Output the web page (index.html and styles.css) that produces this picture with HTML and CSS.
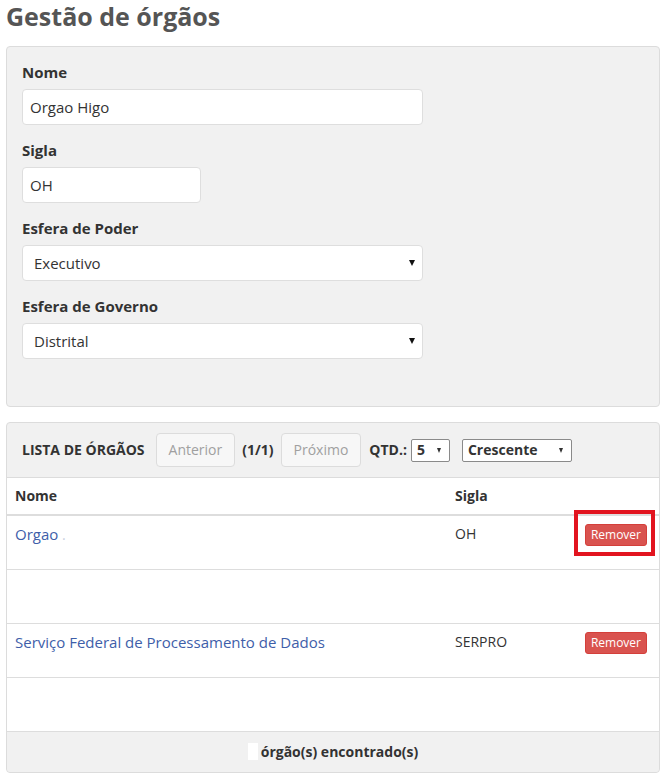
FILE: index.html
```html
<!DOCTYPE html>
<html lang="pt">
<head>
<meta charset="utf-8">
<title>Gestão de órgãos</title>
<link rel="stylesheet" href="styles.css">
</head>
<body>
<div class="page">
  <h1 class="title">Gestão de órgãos</h1>

  <div class="panel form-panel">
    <div class="group">
      <div class="label">Nome</div>
      <div class="field wide">Orgao Higo</div>
    </div>
    <div class="group">
      <div class="label">Sigla</div>
      <div class="field short">OH</div>
    </div>
    <div class="group">
      <div class="label">Esfera de Poder</div>
      <div class="field wide select"><span>Executivo</span><i class="caret"></i></div>
    </div>
    <div class="group">
      <div class="label">Esfera de Governo</div>
      <div class="field wide select"><span>Distrital</span><i class="caret"></i></div>
    </div>
  </div>

  <div class="panel list-panel">
    <div class="list-head">
      <span class="head-title">LISTA DE ÓRGÃOS</span>
      <span class="btn-page">Anterior</span>
      <span class="bold pager">(1/1)</span>
      <span class="btn-page next">Próximo</span>
      <span class="bold">QTD.:</span>
      <span class="mini-select qtd"><span>5</span><i class="caret small"></i></span>
      <span class="mini-select order"><span>Crescente</span><i class="caret small"></i></span>
    </div>

    <div class="table">
      <div class="row head">
        <div class="cell">Nome</div>
        <div class="cell">Sigla</div>
        <div class="cell"></div>
      </div>
      <div class="row data">
        <div class="cell"><span class="link">Orgao</span> <span class="faint">.</span></div>
        <div class="cell">OH</div>
        <div class="cell act"><span class="btn-remove">Remover</span><span class="highlight"></span></div>
      </div>
      <div class="row data">
        <div class="cell"></div>
        <div class="cell"></div>
        <div class="cell act"></div>
      </div>
      <div class="row data">
        <div class="cell"><span class="link">Serviço Federal de Processamento de Dados</span></div>
        <div class="cell">SERPRO</div>
        <div class="cell act"><span class="btn-remove">Remover</span></div>
      </div>
      <div class="row data">
        <div class="cell"></div>
        <div class="cell"></div>
        <div class="cell act"></div>
      </div>
    </div>

    <div class="list-foot"><span class="redact"></span>órgão(s) encontrado(s)</div>
  </div>
</div>
</body>
</html>
```

FILE: styles.css
```css
* { box-sizing: border-box; }

html, body {
  margin: 0;
  padding: 0;
  background: #fff;
}

body {
  font-family: "Open Sans", "Liberation Sans", sans-serif;
  font-size: 14px;
  line-height: 20px;
  color: #333;
}

.page {
  padding: 0 5px 0 6px;
}

.title {
  margin: 0 0 14px;
  font-size: 25px;
  line-height: 32px;
  font-weight: 700;
  color: #555;
}

.panel {
  background: #f1f1f1;
  border: 1px solid #dcdcdc;
  border-radius: 4px;
}

.form-panel {
  padding: 15px 15px 32px;
}

.group {
  margin-bottom: 15px;
}

.label {
  font-size: 15px;
  font-weight: 700;
  line-height: 20px;
  margin-bottom: 7px;
  color: #333;
}

.field {
  height: 36px;
  background: #fff;
  border: 1px solid #dedede;
  border-radius: 4px;
  padding: 7px 7px;
  font-size: 15px;
  line-height: 20px;
  color: #333;
}

.field.wide { width: 401px; }
.field.short { width: 179px; }

.field.select {
  display: flex;
  align-items: center;
  justify-content: space-between;
  padding: 0 7px 0 11px;
}

.caret {
  display: block;
  width: 0;
  height: 0;
  border-left: 3px solid transparent;
  border-right: 3px solid transparent;
  border-top: 6px solid #111;
}

.caret.small {
  border-left-width: 2.5px;
  border-right-width: 2.5px;
  border-top-width: 5px;
  border-top-color: #333;
}

.list-panel {
  margin-top: 15px;
}

.list-head {
  display: flex;
  align-items: center;
  padding: 10px 15px;
  border-bottom: 1px solid #dcdcdc;
}

.head-title {
  font-weight: 700;
  margin-right: 11px;
}

.bold {
  font-weight: 700;
}

.btn-page {
  display: inline-block;
  height: 34px;
  padding: 6px 12px;
  background: #f7f7f7;
  border: 1px solid #dcdcdc;
  border-radius: 4px;
  color: #a0a0a0;
  margin-right: 7px;
}

.btn-page.next {
  margin-right: 8px;
}

.pager {
  margin-right: 7px;
}

.mini-select {
  display: inline-flex;
  align-items: center;
  justify-content: space-between;
  height: 23px;
  background: #fff;
  border: 1px solid #8a8a8a;
  border-radius: 2px;
  font-weight: 700;
  padding: 0 8px 0 5px;
}

.mini-select.qtd {
  width: 39px;
  margin-left: 4px;
}

.mini-select.order {
  width: 110px;
  margin-left: 12px;
}

.table {
  background: #fff;
}

.row {
  display: grid;
  grid-template-columns: 440px 120px 1fr;
  border-bottom: 1px solid #dddddd;
}

.row.head {
  border-bottom: 2px solid #dddddd;
  font-weight: 700;
}

.row.data {
  height: 54px;
  align-items: start;
}

.cell {
  padding: 8px;
  line-height: 20px;
}

.cell.act {
  position: relative;
  display: flex;
  justify-content: flex-end;
  padding-right: 12px;
}

.link {
  color: #3e5ea9;
  font-size: 15px;
}

.faint {
  color: #c8cfe0;
}

.btn-remove {
  display: inline-block;
  height: 22px;
  padding: 0 5px;
  font-size: 12px;
  line-height: 20px;
  color: #fff;
  background: #d9534f;
  border: 1px solid #d43f3a;
  border-radius: 3px;
}

.highlight {
  position: absolute;
  top: -6px;
  right: 4px;
  width: 81px;
  height: 46px;
  border: 4px solid #e2141f;
  pointer-events: none;
}

.list-foot {
  background: #f1f1f1;
  padding: 10px;
  text-align: center;
  font-weight: 700;
  line-height: 20px;
  border-radius: 0 0 4px 4px;
}

.redact {
  display: inline-block;
  width: 10px;
  height: 17px;
  background: #fff;
  vertical-align: -3px;
  margin-right: 3px;
}
```
